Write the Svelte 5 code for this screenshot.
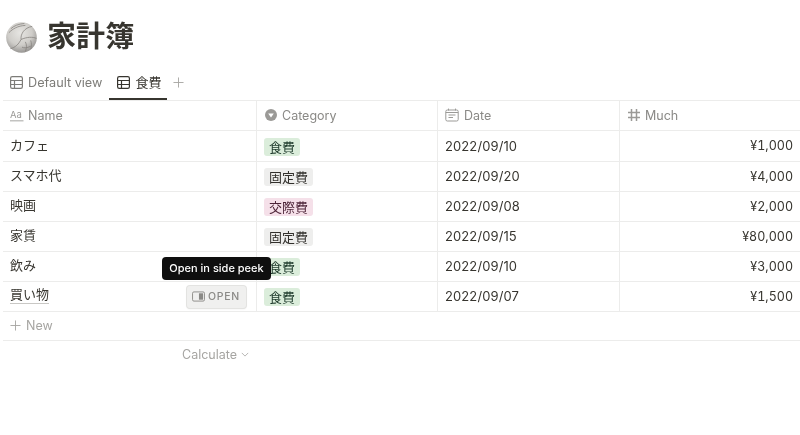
<script>
  const rows = [
    { name: 'カフェ', cat: '食費', tone: 'green', date: '2022/09/10', much: '¥1,000' },
    { name: 'スマホ代', cat: '固定費', tone: 'gray', date: '2022/09/20', much: '¥4,000' },
    { name: '映画', cat: '交際費', tone: 'pink', date: '2022/09/08', much: '¥2,000' },
    { name: '家賃', cat: '固定費', tone: 'gray', date: '2022/09/15', much: '¥80,000' },
    { name: '飲み', cat: '食費', tone: 'green', date: '2022/09/10', much: '¥3,000' },
    { name: '買い物', cat: '食費', tone: 'green', date: '2022/09/07', much: '¥1,500', hover: true }
  ];
</script>

{#snippet tableIcon()}
  <svg class="tabicon" viewBox="0 0 13 13" fill="none" stroke="currentColor" stroke-width="1.2">
    <rect x="0.6" y="0.6" width="11.8" height="11.8" rx="1.6" />
    <path d="M0.6 4.500h11.800M0.600 8.500h11.800M4.500 4.500v7.900" />
  </svg>
{/snippet}

<div class="page">
  <header class="title">
    <svg class="ball" viewBox="0 0 32 32">
      <defs>
        <radialGradient id="bg" cx="0.45" cy="0.35" r="0.72">
          <stop offset="0" stop-color="#e6e5e2" />
          <stop offset="0.55" stop-color="#cfcdc9" />
          <stop offset="1" stop-color="#898785" />
        </radialGradient>
      </defs>
      <circle cx="16" cy="16" r="15.8" fill="url(#bg)" />
      <g fill="none" stroke="#85827e" stroke-width="0.8">
        <path d="M15.500 18C15 12 19 6 27 4.500M15.500 18c6-2.500 12-3 16-1M15.500 18c-2 4.500-6 8.500-11 9.500" />
        <path d="M5 7c3-3 8-5 14-5.500M3 11c4-4 9-7 17-7.500M16.500 26c2 1 5 1 9-1M20 20.500c1.500 3 1.500 6 0 10M25.500 19c1 3 1 6 0 9" />
      </g>
    </svg>
    <h1>家計簿</h1>
  </header>

  <nav class="tabs">
    <div class="tab">{@render tableIcon()}<span>Default view</span></div>
    <div class="tab active">{@render tableIcon()}<span class="cjk">食費</span></div>
    <svg class="plus" viewBox="0 0 12 12" fill="none" stroke="currentColor" stroke-width="1"><path d="M6 .5v11M.5 6h11" /></svg>
  </nav>

  <section class="table">
    <div class="row head">
      <div class="cell c1">
        <svg class="hicon aa" viewBox="0 0 14 14" fill="currentColor">
          <text x="0" y="10" font-size="9.500" font-family="Inter, sans-serif">Aa</text>
          <path d="M0 12.400h13.500v.9H0z" />
        </svg>
        <span>Name</span>
      </div>
      <div class="cell c2">
        <svg class="hicon" viewBox="0 0 14 14"><circle cx="7" cy="7" r="6" fill="currentColor" /><path d="M4.200 5.600h5.600L7 9.500z" fill="#fff" /></svg>
        <span>Category</span>
      </div>
      <div class="cell c3">
        <svg class="hicon" viewBox="0 0 14 14" fill="none" stroke="currentColor" stroke-width="1"><rect x="0.800" y="2" width="12.400" height="11" rx="1.500" /><path d="M.8 4.500h12.400M3.500.6v1.900M10.500.6v1.900M3.500 7h7M3.500 9.500h4.500" /></svg>
        <span>Date</span>
      </div>
      <div class="cell c4">
        <svg class="hicon" viewBox="0 0 14 14" fill="none" stroke="currentColor" stroke-width="1.500"><path d="M4.500 1v12M9.500 1v12M1 4.600h12M1 9.400h12" /></svg>
        <span>Much</span>
      </div>
    </div>

    {#each rows as r}
      <div class="row data">
        <div class="cell c1 name">
          <span class:under={r.hover}>{r.name}</span>
          {#if r.hover}
            <div class="open">
              <svg viewBox="0 0 14 12" width="13" height="11"><rect x="0.500" y="1" width="13" height="10" rx="1.500" fill="none" stroke="currentColor" /><rect x="7.500" y="2.500" width="4.500" height="7" fill="currentColor" /></svg>
              <span>OPEN</span>
            </div>
          {/if}
        </div>
        <div class="cell c2 catcell"><span class="pill {r.tone}">{r.cat}</span></div>
        <div class="cell c3 val date">{r.date}</div>
        <div class="cell c4 val right">{r.much}</div>
      </div>
    {/each}

    <div class="row new">
      <svg viewBox="0 0 12 12" fill="none" stroke="currentColor" stroke-width="1"><path d="M6 .5v11M.5 6h11" /></svg>
      <span>New</span>
    </div>

    <div class="calc">
      <span>Calculate</span>
      <svg viewBox="0 0 10 6" fill="none" stroke="currentColor" stroke-width="1"><path d="M1 1l4 4 4-4" /></svg>
    </div>

    <div class="tooltip">Open in side peek</div>
  </section>
</div>

<style>
  :global(body) {
    margin: 0;
    background: #fff;
  }
  .page {
    width: 800px;
    height: 435px;
    overflow: hidden;
    box-sizing: border-box;
    padding: 16px 0 0 3px;
    font-family: Inter, "Noto Sans CJK JP", sans-serif;
    color: #37352f;
    font-size: 13px;
    filter: blur(0.35px);
  }
  .title {
    display: flex;
    align-items: center;
    gap: 10px;
    height: 42px;
    padding-left: 3px;
  }
  .ball {
    width: 31px;
    height: 31px;
    flex: none;
  }
  h1 {
    margin: 0;
    font-size: 29px;
    font-weight: 700;
    line-height: 42px;
    letter-spacing: 0.1px;
  }
  .tabs {
    display: flex;
    align-items: stretch;
    height: 42px;
    box-sizing: border-box;
    padding-top: 8px;
    color: #7d7c78;
  }
  .tab {
    display: flex;
    align-items: center;
    gap: 5px;
    padding: 0 7px 2px;
    font-size: 12.7px;
    white-space: nowrap;
  }
  .tab.active {
    color: #37352f;
    box-shadow: inset 0 -2px 0 #37352f;
    padding: 0 5px 2px 8px;
    width: 58px;
    box-sizing: border-box;
    font-size: 13px;
  }
  .cjk {
    margin-bottom: 2px;
  }
  .tabicon {
    width: 13px;
    height: 13px;
    flex: none;
  }
  .plus {
    width: 11px;
    height: 11px;
    align-self: center;
    margin: 0 0 2px 6px;
    color: #a6a5a2;
  }
  .table {
    position: relative;
  }
  .row {
    display: flex;
    height: 30px;
    box-sizing: border-box;
    border-top: 1px solid #ececeb;
    align-items: stretch;
  }
  .data:nth-child(2) {
    height: 31px;
  }
  .cell {
    display: flex;
    align-items: center;
    box-sizing: border-box;
    padding: 0 7px;
    border-right: 1px solid #ececeb;
    min-width: 0;
  }
  .c1 { width: 254px; }
  .c2 { width: 181px; }
  .c3 { width: 182px; }
  .c4 { flex: 1; border-right: 0; }
  .head {
    color: #8a8986;
    font-size: 12.5px;
  }
  .head .cell {
    padding-bottom: 1px;
  }
  .hicon {
    width: 14px;
    height: 14px;
    flex: none;
    margin-right: 5px;
    color: #9b9a97;
  }
  .hicon.aa {
    margin-right: 4px;
  }
  .c4 .hicon {
    margin-right: 4px;
  }
  .c2 .hicon {
    margin-right: 4px;
  }
  .val {
    font-size: 12.5px;
    color: #37352f;
    font-variant-numeric: tabular-nums;
    padding-bottom: 1px;
  }
  .val.date {
    font-size: 13px;
    font-variant-numeric: normal;
    letter-spacing: 0.1px;
  }
  .right {
    justify-content: flex-end;
  }
  .name {
    position: relative;
    justify-content: space-between;
  }
  .name > span {
    margin-bottom: 4px;
  }
  .catcell {
    padding-top: 1px;
  }
  .under {
    border-bottom: 1px solid #c9c8c5;
    line-height: 17px;
  }
  .pill {
    display: inline-block;
    padding: 0 5px;
    height: 18px;
    line-height: 18px;
    border-radius: 3px;
    font-size: 13px;
  }
  .green { background: #dbeddb; color: #1c3829; }
  .gray { background: #eeeeed; color: #32302c; }
  .pink { background: #f5e0e9; color: #4c2337; }
  .open {
    display: flex;
    align-items: center;
    gap: 3px;
    height: 22px;
    width: 59px;
    box-sizing: border-box;
    padding-left: 5px;
    margin-right: 3px;
    border-radius: 3px;
    background: #f0f0ef;
    box-shadow: 0 0 0 1px #e3e3e1, 0 1px 2px rgba(15, 15, 15, 0.1);
    color: #8a8986;
    font-size: 10.5px;
    font-weight: 500;
    letter-spacing: 0.7px;
  }
  .new {
    align-items: center;
    gap: 5px;
    padding: 0 0 2px 7px;
    color: #a6a5a2;
    border-bottom: 1px solid #ececeb;
    box-sizing: content-box;
    font-size: 12.5px;
    height: 26px;
  }
  .new svg {
    width: 11px;
    height: 11px;
  }
  .calc {
    display: flex;
    align-items: center;
    gap: 4px;
    height: 26px;
    padding-left: 179px;
    color: #a6a5a2;
    font-size: 12.5px;
  }
  .calc svg {
    width: 8px;
    height: 5px;
  }
  .tooltip {
    position: absolute;
    left: 159px;
    top: 157px;
    width: 109px;
    height: 23px;
    box-sizing: border-box;
    background: #0f0f0f;
    border-radius: 4px;
    color: #fff;
    font-size: 11px;
    font-weight: 500;
    line-height: 23px;
    text-align: center;
    white-space: nowrap;
  }
</style>
